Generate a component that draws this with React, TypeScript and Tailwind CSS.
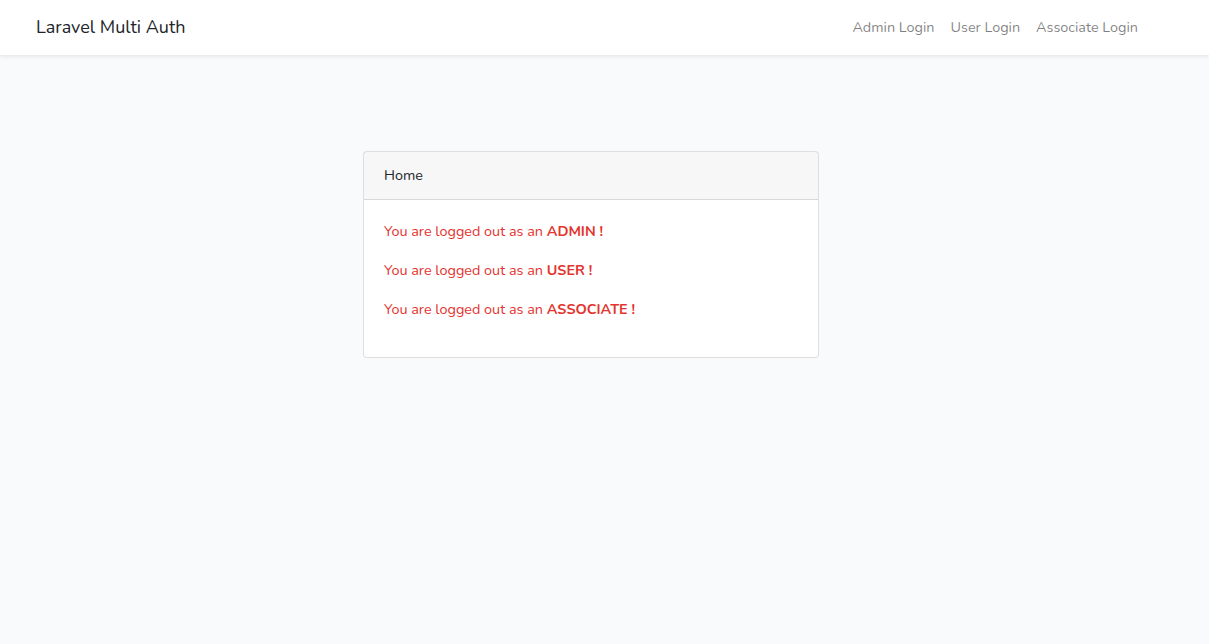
export default function App() {
  const roles = ['ADMIN', 'USER', 'ASSOCIATE']

  return (
    <div className="min-h-[644px] bg-[#f8fafc] font-['Nunito','Lato',sans-serif] text-[14.4px] leading-[1.6] text-[#212529]">
      <nav className="flex h-[55px] items-center justify-between bg-white pl-[36px] pr-[63px] shadow-[0_2px_4px_rgba(0,0,0,0.075)]">
        <a className="text-[18px] text-[#212529]">Laravel Multi Auth</a>
        <ul className="flex items-center">
          {['Admin Login', 'User Login', 'Associate Login'].map((l) => (
            <li key={l}>
              <a className="block px-2 py-2 text-[rgba(0,0,0,0.5)]">{l}</a>
            </li>
          ))}
        </ul>
      </nav>

      <main className="pt-[96px]">
        <div className="ml-[363px] w-[456px] rounded-[4px] border border-[rgba(0,0,0,0.125)] bg-white">
          <div className="border-b border-[rgba(0,0,0,0.125)] bg-[rgba(0,0,0,0.03)] px-5 py-3">Home</div>
          <div className="p-5">
            {roles.map((r) => (
              <p key={r} className="mb-4 text-[#e3342f]">
                You are logged out as an <strong className="font-bold">{r} !</strong>
              </p>
            ))}
          </div>
        </div>
      </main>
    </div>
  )
}
